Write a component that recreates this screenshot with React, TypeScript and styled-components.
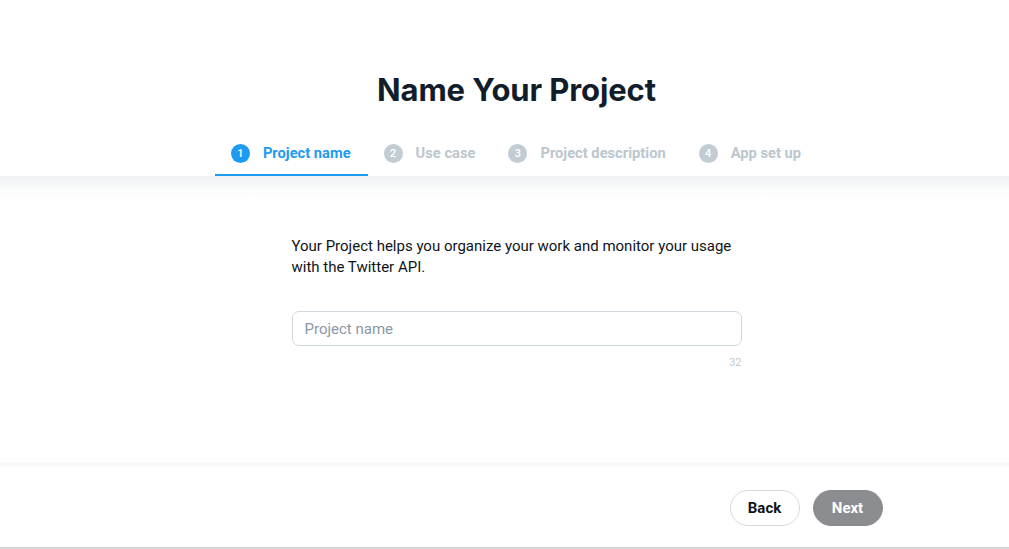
import React from "react";
import styled, { createGlobalStyle } from "styled-components";

const GlobalStyle = createGlobalStyle`
  * { box-sizing: border-box; }
  html, body { margin: 0; padding: 0; background: #ffffff; }
  body { font-family: "Roboto", "Liberation Sans", sans-serif; color: #0f1419; }
`;

const Page = styled.div`
  width: 1009px;
  height: 549px;
  display: flex;
  flex-direction: column;
  background: #ffffff;
  overflow: hidden;
`;

const Header = styled.header`
  padding: 70px 0 0 24px;
  display: flex;
  flex-direction: column;
  align-items: center;
  background: #ffffff;
`;

const Title = styled.h1`
  margin: 0;
  font-family: "Inter", "Roboto", sans-serif;
  font-size: 31px;
  line-height: 40px;
  font-weight: 700;
  color: #121d2b;
  letter-spacing: -0.1px;
`;

const Steps = styled.nav`
  margin-top: 22px;
  display: flex;
`;

const Step = styled.div<{ $active?: boolean }>`
  height: 44px;
  padding: 0 17px 0 16px;
  display: flex;
  align-items: center;
  gap: 13px;
  border-bottom: 2px solid ${(p) => (p.$active ? "#1d9bf0" : "transparent")};
  font-size: 14.7px;
  font-weight: 700;
  color: ${(p) => (p.$active ? "#1d9bf0" : "#bcc6ce")};
`;

const StepNum = styled.span<{ $active?: boolean }>`
  width: 19px;
  height: 19px;
  border-radius: 50%;
  display: flex;
  align-items: center;
  justify-content: center;
  font-size: 11px;
  font-weight: 500;
  color: #ffffff;
  background: ${(p) => (p.$active ? "#1d9bf0" : "#c2ccd3")};
`;

const Body = styled.main`
  flex: 1;
  padding: 60px 0 0 24px;
  display: flex;
  flex-direction: column;
  align-items: center;
  background: linear-gradient(#eef2f4 0px, #fbfcfc 14px, #ffffff 26px);
`;

const Column = styled.div`
  width: 450px;
  display: flex;
  flex-direction: column;
`;

const Intro = styled.p`
  margin: 0;
  font-size: 15px;
  line-height: 21px;
  color: #0f1419;
`;

const Input = styled.input`
  margin-top: 33px;
  width: 100%;
  height: 35px;
  border: 1px solid #cfd9de;
  border-radius: 7px;
  padding: 0 12px;
  font-family: inherit;
  font-size: 15px;
  color: #0f1419;
  outline: none;
  &::placeholder { color: #8a98a6; }
`;

const Counter = styled.div`
  margin-top: 10px;
  align-self: flex-end;
  font-size: 11px;
  line-height: 14px;
  color: #c6c9cc;
`;

const Footer = styled.footer`
  height: 87px;
  display: flex;
  justify-content: center;
  padding-left: 24px;
  background: linear-gradient(#f7f8f8 0px, #fafafa 5px, #ffffff 6px);
  border-bottom: 2px solid #d6d6d6;
`;

const FooterInner = styled.div`
  width: 734px;
  padding: 28px 1px 0 0;
  display: flex;
  justify-content: flex-end;
  gap: 13px;
`;

const Button = styled.button<{ $primary?: boolean }>`
  width: 70px;
  height: 36px;
  border-radius: 18px;
  font-family: inherit;
  font-size: 15px;
  font-weight: 700;
  cursor: pointer;
  border: 1px solid ${(p) => (p.$primary ? "#8b8c8f" : "#d3d9dd")};
  background: ${(p) => (p.$primary ? "#8b8c8f" : "#ffffff")};
  color: ${(p) => (p.$primary ? "#ffffff" : "#0f1419")};
`;

const steps = ["Project name", "Use case", "Project description", "App set up"];

export default function App() {
  return (
    <>
      <GlobalStyle />
      <Page>
        <Header>
          <Title>Name Your Project</Title>
          <Steps>
            {steps.map((s, i) => (
              <Step key={s} $active={i === 0}>
                <StepNum $active={i === 0}>{i + 1}</StepNum>
                {s}
              </Step>
            ))}
          </Steps>
        </Header>
        <Body>
          <Column>
            <Intro>
              Your Project helps you organize your work and monitor your usage
              with the Twitter API.
            </Intro>
            <Input placeholder="Project name" />
            <Counter>32</Counter>
          </Column>
        </Body>
        <Footer>
          <FooterInner>
            <Button>Back</Button>
            <Button $primary>Next</Button>
          </FooterInner>
        </Footer>
      </Page>
    </>
  );
}
